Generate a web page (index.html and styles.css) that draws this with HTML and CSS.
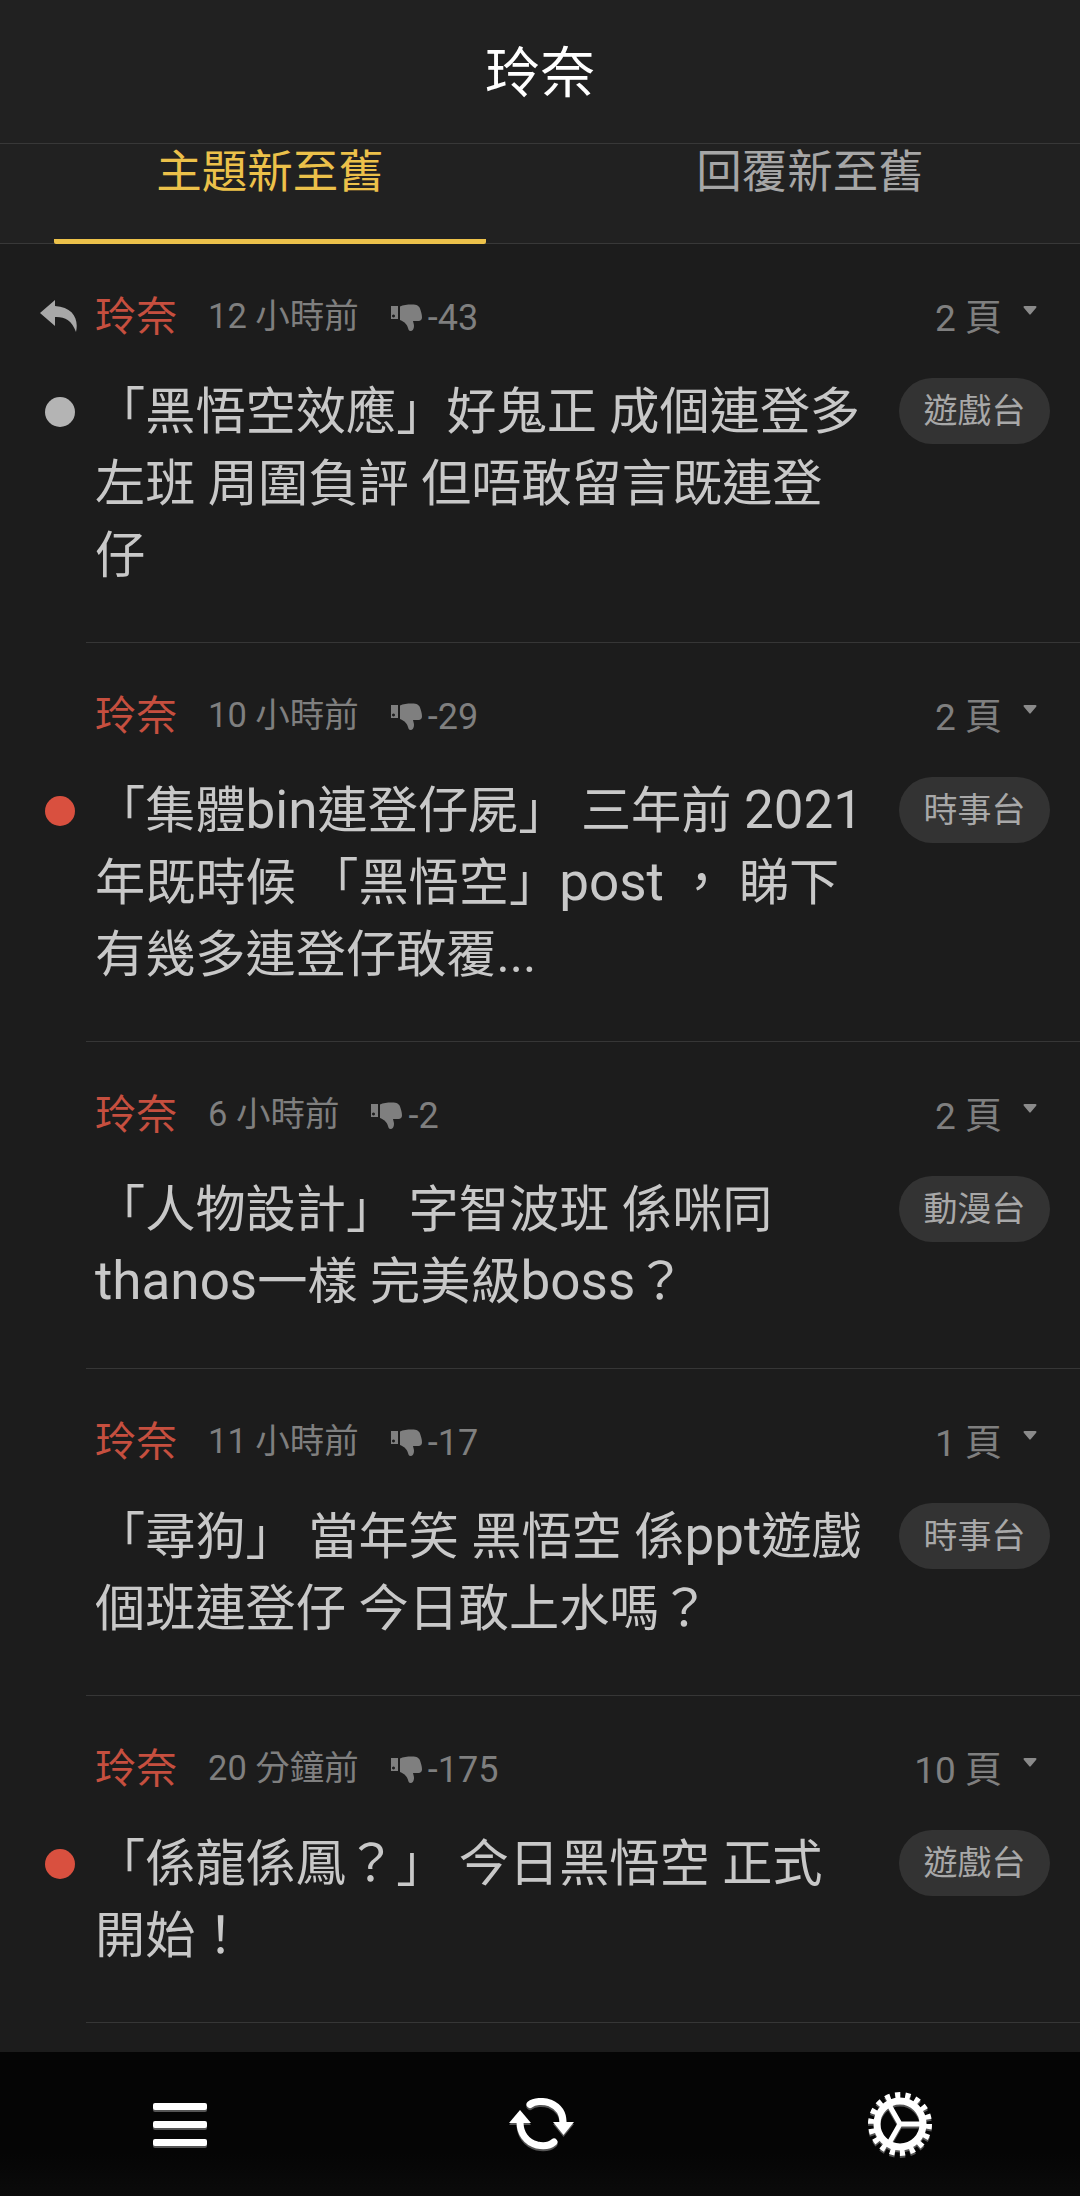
FILE: index.html
```html
<!DOCTYPE html>
<html lang="zh-Hant">
<head>
  <meta charset="UTF-8">
  <title>玲奈</title>
  <link rel="stylesheet" href="styles.css">
</head>
<body>
  <svg class="icon-defs" width="0" height="0">
    <symbol id="thumb-down" viewBox="0 0 32 28">
      <path d="M1 2h7v13H1z M3.5 10.5a1.5 1.5 0 1 0 .01 0z" fill-rule="evenodd"/>
      <path d="M10 2.5C13 1 17 .5 22 .5c5 0 7 1.500 8 4 1 3 2 6 2 9 0 2-1.500 3.500-3.500 3.500H23c.5 2 1 3.500 1 5 0 3-1.500 5-3.500 5-1.500 0-2-1-2.500-3-.7-3-3-6-8-8z"/>
    </symbol>
    <symbol id="caret" viewBox="0 0 14 9">
      <path d="M1.500 0h11a1 1 0 0 1 .7 1.700L7.700 8.300a1 1 0 0 1-1.400 0L.8 1.700A1 1 0 0 1 1.500 0z"/>
    </symbol>
  </svg>

  <div class="page">
    <header class="topbar">玲奈</header>

    <nav class="tabs">
      <div class="tab"><div class="tab-label tab-active">主題新至舊</div></div>
      <div class="tab"><div class="tab-label">回覆新至舊</div></div>
    </nav>

    <main class="list">
      <!-- first row has the reply arrow in the gutter -->
      <article class="row">
        <div class="gutter">
          <svg class="reply-icon" viewBox="0 0 38 32"><path d="M15 0 0 13l15 13v-9c9-.5 17 3 21 15 3-13-3-25-21-26z"/></svg>
          <span class="dot dot-grey"></span>
        </div>
        <div class="row-body">
          <div class="meta">
            <span class="author">玲奈</span>
            <span class="time">12 小時前</span>
            <span class="score"><svg class="thumb"><use href="#thumb-down"/></svg>-43</span>
            <span class="pages">2 頁<svg class="caret"><use href="#caret"/></svg></span>
          </div>
          <div class="content">
            <h3 class="title">「黑悟空效應」好鬼正 成個連登多<br>左班 周圍負評 但唔敢留言既連登<br>仔</h3>
            <span class="pill">遊戲台</span>
          </div>
        </div>
      </article>

      <article class="row">
        <div class="gutter"><span class="dot dot-red"></span></div>
        <div class="row-body">
          <div class="meta">
            <span class="author">玲奈</span>
            <span class="time">10 小時前</span>
            <span class="score"><svg class="thumb"><use href="#thumb-down"/></svg>-29</span>
            <span class="pages">2 頁<svg class="caret"><use href="#caret"/></svg></span>
          </div>
          <div class="content">
            <h3 class="title">「集體<span class="latin">bin</span>連登仔屍」 三年前 <span class="latin">2021</span><br>年既時候 「黑悟空」<span class="latin">post</span> ， 睇下<br>有幾多連登仔敢覆...</h3>
            <span class="pill">時事台</span>
          </div>
        </div>
      </article>

      <article class="row">
        <div class="gutter"></div>
        <div class="row-body">
          <div class="meta">
            <span class="author">玲奈</span>
            <span class="time">6 小時前</span>
            <span class="score"><svg class="thumb"><use href="#thumb-down"/></svg>-2</span>
            <span class="pages">2 頁<svg class="caret"><use href="#caret"/></svg></span>
          </div>
          <div class="content">
            <h3 class="title">「人物設計」 字智波班 係咪同<br><span class="latin">thanos</span>一樣 完美級<span class="latin">boss</span>？</h3>
            <span class="pill">動漫台</span>
          </div>
        </div>
      </article>

      <article class="row">
        <div class="gutter"></div>
        <div class="row-body">
          <div class="meta">
            <span class="author">玲奈</span>
            <span class="time">11 小時前</span>
            <span class="score"><svg class="thumb"><use href="#thumb-down"/></svg>-17</span>
            <span class="pages">1 頁<svg class="caret"><use href="#caret"/></svg></span>
          </div>
          <div class="content">
            <h3 class="title">「尋狗」 當年笑 黑悟空 係<span class="latin">ppt</span>遊戲<br>個班連登仔 今日敢上水嗎？</h3>
            <span class="pill">時事台</span>
          </div>
        </div>
      </article>

      <article class="row">
        <div class="gutter"><span class="dot dot-red"></span></div>
        <div class="row-body">
          <div class="meta">
            <span class="author">玲奈</span>
            <span class="time">20 分鐘前</span>
            <span class="score"><svg class="thumb"><use href="#thumb-down"/></svg>-175</span>
            <span class="pages">10 頁<svg class="caret"><use href="#caret"/></svg></span>
          </div>
          <div class="content">
            <h3 class="title">「係龍係鳳？」 今日黑悟空 正式<br>開始！</h3>
            <span class="pill">遊戲台</span>
          </div>
        </div>
      </article>
    </main>

    <footer class="bottombar">
      <button class="bar-btn">
        <span class="menu-icon"><i></i><i></i><i></i></span>
      </button>
      <button class="bar-btn">
        <svg class="bar-icon refresh-icon" width="66" height="52" viewBox="0 0 66 52">
          <path class="stroke" d="M21 6.500C25 3 34 2.500 41 5c8 3.500 13 10 13 19"/>
          <path class="fill" d="M44 24h21L54.500 37z"/>
          <path class="stroke" d="M11 24c0 11 6 20 17 23 7 1.500 13 .5 17-3"/>
          <path class="fill" d="M0 25 11 12l11 13z"/>
        </svg>
      </button>
      <button class="bar-btn">
        <svg class="bar-icon" width="64" height="64" viewBox="0 0 64 64">
          <circle class="gear-teeth" cx="32" cy="32" r="28.500"/>
          <circle class="gear-ring" cx="32" cy="32" r="23"/>
          <path class="gear-spokes" d="M20 11 32 32M32 32H55M32 32 20 53"/>
        </svg>
      </button>
    </footer>
  </div>
</body>
</html>
```

FILE: styles.css
```css
/* Full window layout */
html, body {
  margin: 0;
  padding: 0;
  background-color: #1c1c1c;
}

body {
  font-family: Roboto, "Noto Sans CJK TC", sans-serif;
}

.icon-defs {
  position: absolute;
}

.page {
  display: flex;
  flex-direction: column;
  width: 1080px;
  height: 2196px;
  overflow: hidden;
}

/* Title bar */
.topbar {
  display: flex;
  align-items: center;
  justify-content: center;
  flex: none;
  height: 144px;
  padding-bottom: 8px;
  box-sizing: border-box;
  border-bottom: 1px solid #383838;
  background-color: #212121;
  color: #fff;
  font-size: 55px;
}

/* Sort tabs */
.tabs {
  display: flex;
  flex: none;
  height: 100px;
  box-sizing: border-box;
  border-bottom: 1px solid #383838;
  background-color: #212121;
}

.tab {
  flex: 1;
  padding: 0 54px;
}

.tab-label {
  height: 100px;
  box-sizing: border-box;
  color: #a6a6a6;
  font-size: 45.5px;
  line-height: 58px;
  text-align: center;
}

.tab-active {
  border-bottom: 5px solid #ecc14a;
  border-radius: 2px;
  color: #ecc14a;
}

/* Thread rows */
.list {
  flex: 1;
  min-height: 0;
  overflow: hidden;
  background-color: #1c1c1c;
}

.row {
  display: flex;
}

.gutter {
  position: relative;
  flex: none;
  width: 86px;
}

.row-body {
  flex: 1;
  min-width: 0;
  padding: 48px 30px 50px 9px;
  border-bottom: 1px solid #363636;
}

.meta {
  display: flex;
  align-items: center;
  height: 48px;
  margin-bottom: 36px;
  color: #7f7f7f;
  font-size: 34.5px;
}

.author {
  margin: 0 31px 6px 0;
  color: #c64f3f;
  font-size: 41px;
}

.time {
  margin: 0 31px 6px 0;
}

.score {
  display: flex;
  align-items: center;
  margin-top: 3px;
  font-size: 36px;
}

.thumb {
  width: 32px;
  height: 28px;
  margin-right: 6px;
  fill: #7f7f7f;
}

.pages {
  display: flex;
  align-items: center;
  margin-left: auto;
  margin-bottom: 3px;
  font-size: 37px;
}

.caret {
  width: 14px;
  height: 9px;
  margin: -9px 13px 0 21px;
  fill: #8a8a8a;
}

.content {
  display: flex;
  justify-content: space-between;
  align-items: flex-start;
}

.title {
  margin: 0;
  color: #c8c8c8;
  font-size: 50.2px;
  font-weight: 400;
  line-height: 72px;
}

/* Latin runs sit a little larger than the CJK around them */
.latin {
  font-size: 53px;
  line-height: 1;
}

.pill {
  flex: none;
  width: 151px;
  height: 66px;
  margin-top: 2px;
  border-radius: 33px;
  background-color: #333333;
  color: #a8a8a8;
  font-size: 34px;
  line-height: 66px;
  text-align: center;
}

.dot {
  position: absolute;
  left: 45px;
  top: 153px;
  width: 30px;
  height: 30px;
  border-radius: 50%;
}

.dot-grey {
  background-color: #b4b4b4;
}

.dot-red {
  background-color: #d9503f;
}

.reply-icon {
  position: absolute;
  left: 40px;
  top: 56px;
  width: 38px;
  height: 32px;
  fill: #a8a8a8;
}

/* Bottom bar */
.bottombar {
  display: flex;
  flex: none;
  height: 144px;
  background: linear-gradient(#050505 70%, #0b0b0b);
}

.bar-btn {
  display: flex;
  flex: 1;
  align-items: center;
  justify-content: center;
  padding: 0;
  border: none;
  background: none;
}

.menu-icon {
  display: flex;
  flex-direction: column;
  gap: 11px;
  width: 54px;
  filter: drop-shadow(0 2px 0 #555);
}

.menu-icon i {
  height: 7px;
  border-radius: 2px;
  background-color: #fff;
}

.bar-icon {
  filter: drop-shadow(0 2px 0 #555);
}

.refresh-icon {
  margin-left: 3px;
}

.stroke {
  fill: none;
  stroke: #fff;
  stroke-width: 7;
  stroke-linecap: round;
}

.fill {
  fill: #fff;
}

.gear-teeth {
  fill: none;
  stroke: #fff;
  stroke-width: 7;
  stroke-dasharray: 5 4.950;
}

.gear-ring {
  fill: none;
  stroke: #fff;
  stroke-width: 7;
}

.gear-spokes {
  fill: none;
  stroke: #fff;
  stroke-width: 5;
}
```
